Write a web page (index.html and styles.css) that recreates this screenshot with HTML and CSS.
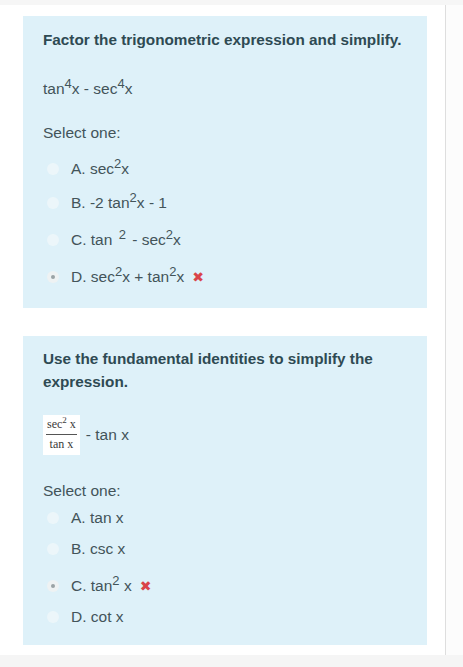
FILE: index.html
```html
<!DOCTYPE html>
<html>
<head>
<meta charset="utf-8">
<link rel="stylesheet" href="styles.css">
</head>
<body>
<div class="topbar"></div>
<div class="page">
  <main class="content">
    <section class="card card-1">
      <h2 class="qtext">Factor the trigonometric expression and simplify.</h2>
      <p class="expr">tan<sup>4</sup>x - sec<sup>4</sup>x</p>
      <p class="prompt">Select one:</p>
      <ul class="answers a1">
        <li><span class="radio"></span><span>A. sec<sup>2</sup>x</span></li>
        <li><span class="radio"></span><span>B. -2 tan<sup>2</sup>x - 1</span></li>
        <li><span class="radio"></span><span>C. tan <sup class="sp">2</sup> - sec<sup>2</sup>x</span></li>
        <li><span class="radio checked"></span><span>D. sec<sup>2</sup>x + tan<sup>2</sup>x</span><span class="wrong">&#10006;</span></li>
      </ul>
    </section>
    <section class="card card-2">
      <h2 class="qtext">Use the fundamental identities to simplify the expression.</h2>
      <div class="expr2">
        <span class="frac"><span class="num">sec<sup>2</sup> x</span><span class="den">tan x</span></span>
        <span class="rest">- tan x</span>
      </div>
      <p class="prompt">Select one:</p>
      <ul class="answers a2">
        <li><span class="radio"></span><span>A. tan x</span></li>
        <li><span class="radio"></span><span>B. csc x</span></li>
        <li class="tall"><span class="radio checked"></span><span>C. tan<sup>2</sup> x</span><span class="wrong">&#10006;</span></li>
        <li class="last"><span class="radio"></span><span>D. cot x</span></li>
      </ul>
    </section>
  </main>
  <aside class="rail"></aside>
</div>
<div class="bottombar"></div>
</body>
</html>
```

FILE: styles.css
```css
html, body {
  margin: 0;
  padding: 0;
  background: #ffffff;
}
body {
  width: 463px;
  height: 667px;
  overflow: hidden;
  font-family: "Liberation Sans", Arial, sans-serif;
  color: #435459;
}
.topbar {
  height: 5px;
  background: #f6f6f6;
}
.page {
  display: flex;
  height: 650px;
}
.content {
  width: 446px;
  padding: 11px 0 0 23px;
  box-sizing: border-box;
}
.rail {
  width: 17px;
  border-left: 1px solid #dedede;
  background: #fcfcfc;
}
.bottombar {
  height: 12px;
  background: #f5f5f5;
}
.card {
  width: 404px;
  background: #def1f9;
  box-sizing: border-box;
  padding: 0 20px;
}
.card-1 {
  height: 292px;
  padding-top: 12px;
}
.card-2 {
  margin-top: 28px;
  height: 309px;
  padding-top: 11px;
}
.qtext {
  margin: 0;
  font-size: 15.3px;
  font-weight: bold;
  line-height: 23px;
  color: #2e4a53;
}
.expr {
  margin: 28px 0 0;
  font-size: 15.5px;
  line-height: 20px;
}
sup {
  font-size: 13px;
  line-height: 0;
  vertical-align: 6px;
}
.prompt {
  margin: 0;
  font-size: 15.5px;
  line-height: 20px;
}
.card-1 .prompt { margin-top: 24px; }
.answers {
  list-style: none;
  margin: 0;
  padding: 0;
}
.answers li {
  display: flex;
  align-items: center;
  font-size: 15.5px;
  height: 20px;
}
.a1 { margin-top: 16px; }
.a1 li + li { margin-top: 14px; }
.a1 li:nth-child(3), .a1 li:nth-child(4) { margin-top: 17px; }
.radio {
  width: 12px;
  height: 12px;
  border-radius: 50%;
  background: #ecf6fa;
  margin: 0 12px 0 4px;
  position: relative;
  flex: none;
}
.radio.checked {
  background: #eef2f3;
}
.radio.checked::after {
  content: "";
  position: absolute;
  left: 4px;
  top: 4px;
  width: 4px;
  height: 4px;
  border-radius: 50%;
  background: #9aa3a6;
}
.sp { margin-left: 2px; margin-right: 2px; }
.wrong {
  color: #d94449;
  font-size: 14px;
  margin-left: 8px;
  font-family: "DejaVu Sans", sans-serif;
}
.expr2 {
  margin-top: 22px;
  display: flex;
  align-items: center;
}
.frac {
  display: inline-flex;
  flex-direction: column;
  align-items: center;
  background: #ffffff;
  padding: 2px 3px 3px;
  font-family: "Liberation Serif", "Times New Roman", serif;
  font-size: 12px;
  color: #3a3a3a;
  line-height: 15px;
}
.frac .num {
  border-bottom: 1px solid #555;
  padding: 0 1px 2px;
}
.frac .num sup { font-size: 9px; vertical-align: 5px; }
.frac .den { padding-top: 2px; }
.rest {
  margin-left: 6px;
  font-size: 15.5px;
}
.card-2 .prompt { margin-top: 26px; }
.a2 { margin-top: 7px; }
.a2 li + li { margin-top: 11px; }
.a2 li.tall { margin-top: 17px; }
.a2 li.last { margin-top: 11px; }
```
